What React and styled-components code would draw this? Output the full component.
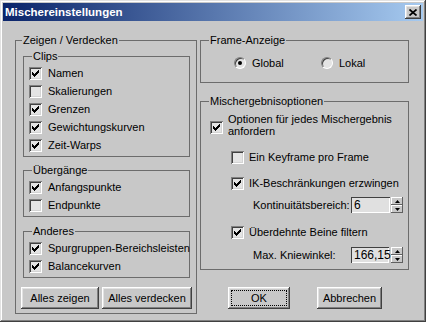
import React from 'react';
import styled, {createGlobalStyle} from 'styled-components';

const FACE = '#c8c8c8';

const GlobalStyle = createGlobalStyle`
  html, body {
    margin: 0;
    padding: 0;
    background: ${FACE};
  }
  * {
    box-sizing: border-box;
  }
`

const Window = styled.div`
  width: 426px;
  height: 322px;
  padding: 3px;
  display: flex;
  flex-direction: column;
  background: ${FACE};
  font-family: "Liberation Sans", Arial, sans-serif;
  font-size: 11px;
  color: #000;
  box-shadow: inset -1px -1px #404040, inset 1px 1px #e2e2e2,
    inset -2px -2px #808080, inset 2px 2px #ffffff;
`

const TitleBar = styled.div`
  height: 18px;
  display: flex;
  align-items: center;
  justify-content: space-between;
  padding: 0 2px 0 2px;
  background: linear-gradient(to right, #0a246a, #a6caf0);
  color: #fff;
  font-weight: bold;
  font-size: 11.5px;
`

const CloseButton = styled.div`
  width: 16px;
  height: 14px;
  display: flex;
  align-items: center;
  justify-content: center;
  background: ${FACE};
  box-shadow: inset -1px -1px #404040, inset 1px 1px #ffffff,
    inset -2px -2px #808080, inset 2px 2px #e2e2e2;
`

const Body = styled.div`
  flex: 1;
  display: flex;
  align-items: flex-start;
  gap: 3px;
  padding: 19px 0 0 12px;
`

const Group = styled.div`
  position: relative;
  display: flex;
  flex-direction: column;
  border: 1px solid #6c6c6c;
  width: ${p => p.$w ? p.$w + 'px' : 'auto'};
  height: ${p => p.$h ? p.$h + 'px' : 'auto'};
  margin-top: ${p => p.$mt || 0}px;
  padding: ${p => p.$pad || '0'};
`

const Legend = styled.span`
  position: absolute;
  top: -7px;
  left: ${p => p.$x ?? 8}px;
  padding: 0 1px;
  line-height: 13px;
  background: ${FACE};
  white-space: nowrap;
`

const Column = styled.div`
  display: flex;
  flex-direction: column;
  width: ${p => p.$w}px;
`

const CheckRow = styled.div`
  display: flex;
  align-items: center;
  gap: ${p => p.$gap ?? 6}px;
  height: ${p => p.$h ?? 18}px;
  margin-top: ${p => p.$mt || 0}px;
  padding-left: ${p => p.$indent || 0}px;
  white-space: nowrap;
`

const Box = styled.div`
  width: 13px;
  height: 13px;
  flex-shrink: 0;
  display: flex;
  align-items: center;
  justify-content: center;
  background: #e4e4e4;
  margin-top: ${p => p.$mt || 0}px;
  box-shadow: inset 1px 1px #808080, inset -1px -1px #ffffff,
    inset 2px 2px #404040, inset -2px -2px #d4d4d4;
`

const TwoLines = styled.div`
  line-height: 12px;
`

const RadioRow = styled.div`
  display: flex;
  height: 18px;
`

const RadioItem = styled.div`
  width: 99px;
  display: flex;
  align-items: center;
  gap: 6px;
`

const RadioCircle = styled.div`
  width: 12px;
  height: 12px;
  border-radius: 50%;
  display: flex;
  align-items: center;
  justify-content: center;
  background: #e4e4e4;
  border: 1px solid;
  border-color: #808080 #ffffff #ffffff #808080;
  box-shadow: inset 1px 1px #404040;
`

const Dot = styled.div`
  width: 4px;
  height: 4px;
  border-radius: 50%;
  background: #000;
`

const FieldRow = styled.div`
  display: flex;
  align-items: center;
  height: 18px;
  margin-top: ${p => p.$mt || 0}px;
  padding-left: 43px;
`

const FieldLabel = styled.span`
  width: 98px;
  white-space: nowrap;
`

const SpinInput = styled.div`
  width: ${p => p.$w}px;
  height: 16px;
  display: flex;
  align-items: center;
  padding-left: 3px;
  background: #e0e0e0;
  font-size: 12px;
  box-shadow: inset 1px 1px #404040, inset -1px -1px #ffffff;
`

const Spinner = styled.div`
  width: 12px;
  height: 16px;
  margin-left: ${p => p.$ml || 1}px;
  display: flex;
  flex-direction: column;
`

const SpinHalf = styled.div`
  flex: 1;
  display: flex;
  align-items: center;
  justify-content: center;
  background: ${FACE};
  box-shadow: inset -1px -1px #606060, inset 1px 1px #ffffff;
`

const ButtonRow = styled.div`
  display: flex;
  gap: ${p => p.$gap}px;
  margin: ${p => p.$m};
`

const Button = styled.div`
  width: ${p => p.$w}px;
  height: 22px;
  display: flex;
  align-items: center;
  justify-content: center;
  padding: 3px;
  background: ${FACE};
  box-shadow: inset -1px -1px #404040, inset 1px 1px #ffffff,
    inset -2px -2px #808080, inset 2px 2px #e2e2e2;
  white-space: nowrap;
`

const Focus = styled.span`
  flex: 1;
  align-self: stretch;
  display: flex;
  align-items: center;
  justify-content: center;
  border: 1px dotted #000;
`

const CHECK_COLS = [2, 3, 4, 3, 2, 1, 0];

const CheckMark = () => (
    <svg width="7" height="7" viewBox="0 0 7 7">
        {CHECK_COLS.map((y, x) => <rect key={x} x={x} y={y} width="1" height="3" fill="#000"/>)}
    </svg>
);

const Check = ({on, mt}) => (
    <Box $mt={mt}>{on ? <CheckMark/> : null}</Box>
);

const CheckItem = ({on, children, gap, indent, mt}) => (
    <CheckRow $gap={gap} $indent={indent} $mt={mt}>
        <Check on={on}/>
        <span>{children}</span>
    </CheckRow>
);

const Radio = ({on, children}) => (
    <RadioItem>
        <RadioCircle>{on ? <Dot/> : null}</RadioCircle>
        <span>{children}</span>
    </RadioItem>
);

const Arrow = ({down}) => (
    <svg width="5" height="3" viewBox="0 0 5 3">
        <polygon points={down ? '0,0 5,0 2.5,3' : '2.5,0 5,3 0,3'} fill="#000"/>
    </svg>
);

const SpinField = ({label, value, w, ml, mt}) => (
    <FieldRow $mt={mt}>
        <FieldLabel>{label}</FieldLabel>
        <SpinInput $w={w}>{value}</SpinInput>
        <Spinner $ml={ml}>
            <SpinHalf><Arrow/></SpinHalf>
            <SpinHalf><Arrow down/></SpinHalf>
        </Spinner>
    </FieldRow>
);

const App = () => {
    return (
        <Window>
            <GlobalStyle/>
            <TitleBar>
                <span>Mischereinstellungen</span>
                <CloseButton>
                    <svg width="8" height="7" viewBox="0 0 8 7">
                        <path d="M0.5 0.5 L7.5 6.5 M7.5 0.5 L0.5 6.5" stroke="#000" strokeWidth="1.7"/>
                    </svg>
                </CloseButton>
            </TitleBar>
            <Body>
                <Group $w={182} $h={274} $pad="15px 6px 0 7px">
                    <Legend $x={6}>Zeigen / Verdecken</Legend>
                    <Group $pad="7px 0 2px 5px">
                        <Legend>Clips</Legend>
                        <CheckItem on>Namen</CheckItem>
                        <CheckItem>Skalierungen</CheckItem>
                        <CheckItem on>Grenzen</CheckItem>
                        <CheckItem on>Gewichtungskurven</CheckItem>
                        <CheckItem on>Zeit-Warps</CheckItem>
                    </Group>
                    <Group $mt={13} $pad="7px 0 2px 5px">
                        <Legend>Übergänge</Legend>
                        <CheckItem on>Anfangspunkte</CheckItem>
                        <CheckItem>Endpunkte</CheckItem>
                    </Group>
                    <Group $mt={14} $pad="7px 0 2px 5px">
                        <Legend>Anderes</Legend>
                        <CheckItem on>Spurgruppen-Bereichsleisten</CheckItem>
                        <CheckItem on>Balancekurven</CheckItem>
                    </Group>
                    <ButtonRow $gap={3} $m="9px -2px 0 -2px">
                        <Button $w={78}>Alles zeigen</Button>
                        <Button $w={90}>Alles verdecken</Button>
                    </ButtonRow>
                </Group>
                <Column $w={209}>
                    <Group $h={43} $pad="13px 0 0 33px">
                        <Legend>Frame-Anzeige</Legend>
                        <RadioRow>
                            <Radio on>Global</Radio>
                            <Radio>Lokal</Radio>
                        </RadioRow>
                    </Group>
                    <Group $mt={18} $h={169} $pad="11px 0 0 9px">
                        <Legend>Mischergebnisoptionen</Legend>
                        <CheckRow $gap={5} $h={24}>
                            <Check on mt={4}/>
                            <TwoLines>Optionen für jedes Mischergebnis<br/>anfordern</TwoLines>
                        </CheckRow>
                        <CheckItem gap={5} indent={21} mt={11}>Ein Keyframe pro Frame</CheckItem>
                        <CheckItem on gap={5} indent={21} mt={8}>IK-Beschränkungen erzwingen</CheckItem>
                        <SpinField label="Kontinuitätsbereich:" value="6" w={39} ml={1} mt={4}/>
                        <CheckItem on gap={5} indent={21} mt={9}>Überdehnte Beine filtern</CheckItem>
                        <SpinField label="Max. Kniewinkel:" value="166,15" w={38} ml={2} mt={5}/>
                    </Group>
                    <ButtonRow $gap={27} $m="17px 0 0 28px">
                        <Button $w={62}><Focus>OK</Focus></Button>
                        <Button $w={65}>Abbrechen</Button>
                    </ButtonRow>
                </Column>
            </Body>
        </Window>
    );
};

export default App;
